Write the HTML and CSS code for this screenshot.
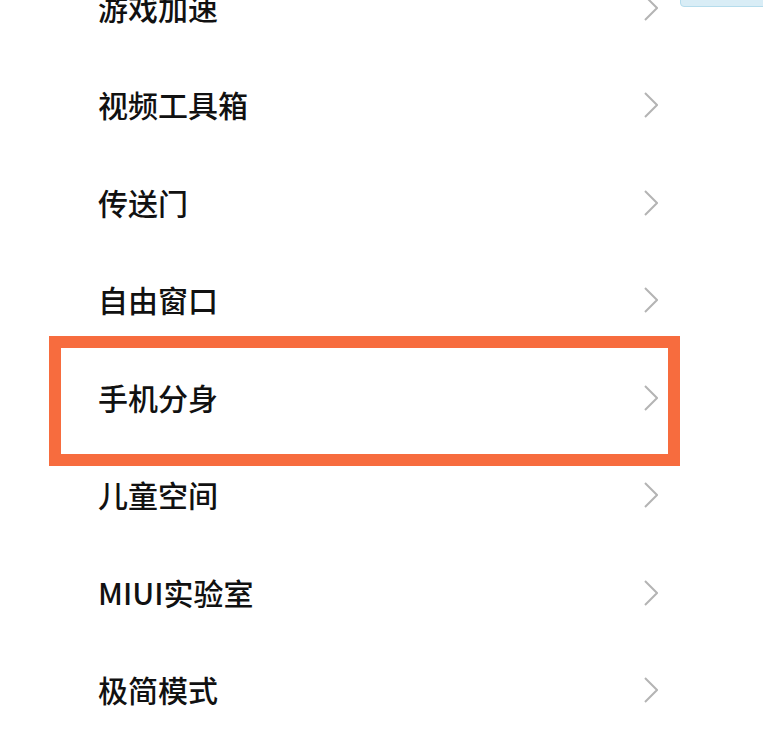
FILE: index.html
```html
<!DOCTYPE html>
<html lang="zh-CN">
<head>
  <meta charset="UTF-8">
  <title>更多设置</title>
  <meta name="viewport" content="width=device-width, initial-scale=1.0">
  <link rel="stylesheet" href="styles.css">
</head>
<body>
  <div class="toast-edge"></div>

  <ul class="menu">
    <li class="menu-row"><span>游戏加速</span><svg class="chev" viewBox="0 0 14 26"><polyline points="1,1 13,13 1,25"/></svg></li>
    <li class="menu-row"><span>视频工具箱</span><svg class="chev" viewBox="0 0 14 26"><polyline points="1,1 13,13 1,25"/></svg></li>
    <li class="menu-row"><span>传送门</span><svg class="chev" viewBox="0 0 14 26"><polyline points="1,1 13,13 1,25"/></svg></li>
    <li class="menu-row"><span>自由窗口</span><svg class="chev" viewBox="0 0 14 26"><polyline points="1,1 13,13 1,25"/></svg></li>
    <li class="menu-row marked"><span>手机分身</span><svg class="chev" viewBox="0 0 14 26"><polyline points="1,1 13,13 1,25"/></svg></li>
    <li class="menu-row"><span>儿童空间</span><svg class="chev" viewBox="0 0 14 26"><polyline points="1,1 13,13 1,25"/></svg></li>
    <li class="menu-row"><span>MIUI实验室</span><svg class="chev" viewBox="0 0 14 26"><polyline points="1,1 13,13 1,25"/></svg></li>
    <li class="menu-row"><span>极简模式</span><svg class="chev" viewBox="0 0 14 26"><polyline points="1,1 13,13 1,25"/></svg></li>
  </ul>
</body>
</html>
```

FILE: styles.css
```css
body {
  margin: 0; background: #fff; color: #111;
  font-family: "Noto Sans CJK SC", "Noto Sans", sans-serif;
  overflow: hidden; height: 734px;
}
.toast-edge {
  position: fixed; top: -8px; left: 680px; right: -8px; height: 13px;
  background: #d9edf6; border: 1px solid #b5dcec; border-radius: 4px;
}
.menu {
  list-style: none; margin: -41px 0 0 0; padding: 0 105px 0 98px;
}
.menu-row {
  position: relative;
  display: flex; align-items: center; justify-content: space-between;
  height: 97.5px;
  font-size: 30px; font-weight: 500;
}
.menu-row span { margin-top: -2px; }
.chev { width: 14px; height: 26px; fill: none; stroke: #b4b4b4; stroke-width: 2; }
.marked::after {
  content: ""; position: absolute;
  top: -13px; bottom: -19px; left: -49px; right: -22px;
  border: 12px solid #f76c3e;
}
```
